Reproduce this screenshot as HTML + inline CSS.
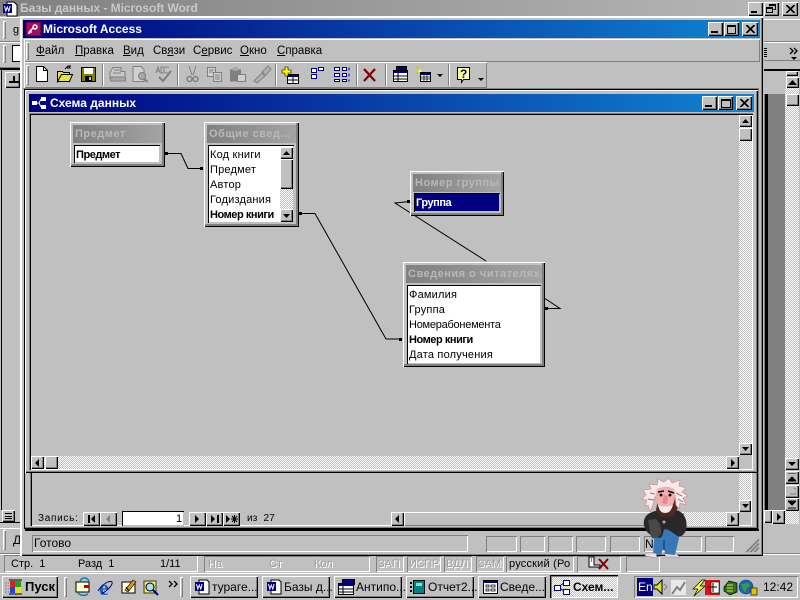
<!DOCTYPE html>
<html><head><meta charset="utf-8"><style>
html,body{margin:0;padding:0;background:#c0c0c0}
#r{position:relative;width:800px;height:600px;overflow:hidden;background:#c0c0c0;font:11px/14px "Liberation Sans",sans-serif;color:#000}
#r div,#r span.t,#r svg{position:absolute}
.t{position:absolute;white-space:nowrap;line-height:14px}
.b{background:#c0c0c0;box-shadow:inset 1px 1px #fff,inset -1px -1px #000,inset -2px -2px #808080}
.g{width:3px;background:#c0c0c0;box-shadow:inset 1px 1px #fff,inset -1px -1px #808080}
.s{width:2px;background:#fff;box-shadow:inset 1px 0 #808080}
.d{background:repeating-conic-gradient(#fff 0 25%,#c0c0c0 0 50%) 0 0/2px 2px}
.tt{background:linear-gradient(90deg,#000080,#1084d0)}
.bar{background:linear-gradient(90deg,#808080,#a4a4a4)}
.w{font-weight:bold;color:#fff;font-size:12px}
.tb{background:#c0c0c0;box-shadow:inset 1px 1px #fff,inset -1px -1px #000,inset -2px -2px #808080;overflow:hidden;white-space:nowrap;line-height:20px;font-size:12px}
.box{background:#c0c0c0;box-shadow:inset 1px 1px #fff,inset -1px -1px #000,inset -2px -2px #808080,inset -3px -3px #808080}
.list{background:#fff;box-shadow:inset 1px 1px #000,inset -1px -1px #c0c0c0;overflow:hidden}
.hd{color:#b8b8b8;font-weight:bold;font-size:11px;letter-spacing:.5px;line-height:18px;padding-left:2px;white-space:nowrap;overflow:hidden;box-sizing:border-box}
.it{position:absolute;left:2px;white-space:nowrap;font-size:11px;line-height:15px;letter-spacing:.2px}
.bd{font-weight:bold;letter-spacing:-.45px}
.gr{color:#a0a0a0;text-shadow:1px 1px #fff}
.m{font-size:11.5px;top:44px}
.pn{box-shadow:inset 1px 1px #808080,inset -1px -1px #fff}
</style></head><body><div id="r">

<!-- Word window -->
<div style="left:0;top:0;width:800px;height:16px;background:linear-gradient(90deg,#808080,#b8b8b8)"></div>
<svg style="left:2px;top:1px" width="16" height="16" viewBox="0 0 16 16"><path d="M5 1h7l3 3v11H5z" fill="#fff" stroke="#000"/><rect x="1" y="3" width="9" height="9" fill="#000080"/><path d="M2.5 5l1.3 5 1.5-4 1.5 4 1.3-5" stroke="#fff" fill="none"/></svg>
<span class="t" style="left:20px;top:1px;color:#c8c8c8;font-weight:bold;font-size:12px;letter-spacing:-.05px">Базы данных - Microsoft Word</span>
<div class="b" style="left:748px;top:2px;width:15px;height:14px"></div><div style="left:751px;top:11px;width:6px;height:2px;background:#000"></div>
<div class="b" style="left:764px;top:2px;width:15px;height:14px"></div>
<svg style="left:766px;top:4px" width="11" height="10"><path d="M3.5 2.5V.5h6v5h-2M3 1.5h6M.5 3.5h6v5h-6zM.5 4.5h6" fill="none" stroke="#000"/></svg>
<div class="b" style="left:782px;top:2px;width:16px;height:14px"></div>
<svg style="left:786px;top:5px" width="9" height="8"><path d="M0 0l8 8M1 0l8 8M8 0L0 8M9 0L1 8" stroke="#000"/></svg>

<!-- Word left strip -->
<div style="left:0;top:17px;width:20px;height:1px;background:#fff"></div>
<div class="g" style="left:3px;top:21px;height:18px"></div>
<span class="t" style="left:13px;top:23px;text-decoration:underline">g</span>
<div style="left:0;top:42px;width:20px;height:1px;background:#fff"></div>
<div style="left:0;top:41px;width:20px;height:1px;background:#808080"></div>
<div class="g" style="left:3px;top:45px;height:18px"></div>
<div style="left:13px;top:46px;width:9px;height:15px;background:#fff;outline:1px solid #000"></div>
<div style="left:0;top:67px;width:20px;height:1px;background:#808080"></div>
<div style="left:1px;top:68px;width:1px;height:442px;background:#000"></div>
<div style="left:0;top:68px;width:20px;height:2px;background:#000"></div>
<div class="b" style="left:5px;top:72px;width:15px;height:16px"></div>
<svg style="left:8px;top:75px" width="12" height="10"><path d="M5 1h2v5H5zM1 6h10v2H1z" fill="#000"/></svg>
<div style="left:0;top:522px;width:20px;height:1px;background:#000"></div>
<div class="b" style="left:2px;top:510px;width:13px;height:12px"></div>
<svg style="left:5px;top:513px" width="8" height="7"><path d="M0 .5h7M0 3.5h7M0 5.5h7" stroke="#000"/></svg>
<div style="left:0;top:528px;width:20px;height:1px;background:#fff"></div>
<div class="g" style="left:3px;top:530px;height:20px"></div>
<span class="t" style="left:13px;top:533px;font-size:12px">Д</span>
<div style="left:0;top:553px;width:800px;height:1px;background:#808080"></div>
<div style="left:0;top:554px;width:800px;height:1px;background:#fff"></div>

<!-- Word right strip -->
<div style="left:764px;top:19px;width:36px;height:1px;background:#fff"></div>
<div style="left:764px;top:41px;width:36px;height:1px;background:#808080"></div>
<div style="left:764px;top:42px;width:36px;height:1px;background:#fff"></div>
<div style="left:764px;top:60px;width:36px;height:1px;background:#808080"></div>
<svg style="left:764px;top:46px" width="36" height="16"><path d="M0 2.5h3M0 4.5h3M0 6.5h3M0 8.5h3M0 10.5h3" stroke="#000"/><path d="M26 2l3 3-3 3M30 2l3 3-3 3" stroke="#000" fill="none" stroke-width="1.3"/><path d="M27 11h6l-3 3z" fill="#000"/></svg>
<div style="left:764px;top:69px;width:36px;height:2px;background:#000"></div>
<div style="left:764px;top:94px;width:21px;height:416px;background:#808080"></div>
<div style="left:765px;top:94px;width:3px;height:416px;background:#000"></div>
<div style="left:765px;top:71px;width:20px;height:23px;background:#c0c0c0"></div>
<div class="d" style="left:785px;top:88px;width:14px;height:370px"></div>
<div class="b" style="left:786px;top:71px;width:12px;height:5px"></div>
<div class="b" style="left:786px;top:77px;width:13px;height:11px"></div><svg style="left:788px;top:80px" width="9" height="5"><path d="M4.5 0L9 5H0z" fill="#000"/></svg>
<div class="b" style="left:786px;top:94px;width:13px;height:12px"></div>
<div class="b" style="left:785px;top:458px;width:14px;height:12px"></div><svg style="left:788px;top:462px" width="8" height="4"><path d="M0 0h8L4 4z" fill="#000"/></svg>
<div class="b" style="left:785px;top:471px;width:14px;height:13px"></div><svg style="left:788px;top:473px" width="8" height="9"><path d="M0 0h8M0 8h8L4 4zM4 3" stroke="#000" fill="#000"/></svg>
<div class="b" style="left:785px;top:485px;width:14px;height:13px"></div><svg style="left:789px;top:487px" width="7" height="8"><path d="M5 1a3 3 0 0 1-1 6H1" stroke="#808080" fill="none"/></svg>
<div class="b" style="left:785px;top:498px;width:14px;height:13px"></div><svg style="left:788px;top:500px" width="8" height="9"><path d="M0 8h8M0 1h8L4 5z" stroke="#000" fill="#000"/></svg>
<div class="b" style="left:764px;top:510px;width:8px;height:13px"></div>
<div class="b" style="left:772px;top:510px;width:13px;height:14px"></div><svg style="left:777px;top:513px" width="4" height="8"><path d="M0 0v8l4-4z" fill="#000"/></svg>
<div class="d" style="left:785px;top:511px;width:14px;height:13px"></div>

<!-- Word status bar -->
<div class="pn" style="left:4px;top:555px;width:194px;height:17px"></div>
<span class="t" style="left:11px;top:557px">Стр.&nbsp; 1</span><span class="t" style="left:78px;top:557px">Разд&nbsp; 1</span><span class="t" style="left:160px;top:557px">1/11</span>
<div class="pn" style="left:204px;top:556px;width:166px;height:16px"></div>
<span class="t gr" style="left:208px;top:557px">На</span><span class="t gr" style="left:269px;top:557px">Ст</span><span class="t gr" style="left:314px;top:557px">Кол</span>
<div class="pn" style="left:376px;top:556px;width:28px;height:16px"></div>
<span class="t gr" style="left:378px;top:557px">ЗАП</span>
<div class="pn" style="left:407px;top:556px;width:34px;height:16px"></div>
<span class="t gr" style="left:409px;top:557px;letter-spacing:-.3px">ИСПР</span>
<div class="pn" style="left:444px;top:556px;width:28px;height:16px"></div>
<span class="t gr" style="left:446px;top:557px">ВДЛ</span>
<div class="pn" style="left:476px;top:556px;width:28px;height:16px"></div>
<span class="t gr" style="left:478px;top:557px">ЗАМ</span>
<div class="pn" style="left:506px;top:556px;width:68px;height:16px"></div>
<span class="t" style="left:509px;top:557px;letter-spacing:.2px">русский (Ро</span>
<div class="pn" style="left:577px;top:556px;width:44px;height:16px"></div>
<svg style="left:588px;top:556px" width="22" height="14"><path d="M1 1h5v8h6v2H1zM3 3h1M3 5h1" stroke="#000" fill="#fff"/><path d="M11 3l9 10M20 3l-9 10" stroke="#800000" stroke-width="2"/></svg>
<div class="pn" style="left:626px;top:556px;width:34px;height:16px"></div>

<!-- Access window -->
<div style="left:20px;top:16px;width:743px;height:540px;background:#c0c0c0;box-shadow:inset 2px 2px #fff,inset -1px -1px #000,inset -2px -2px #808080"></div>
<div class="tt" style="left:23px;top:20px;width:737px;height:18px"></div>
<svg style="left:26px;top:22px" width="15" height="14"><rect width="15" height="14" fill="#800040"/><rect x="1" y="1" width="13" height="12" fill="#a01060"/><path d="M3 10l5-5M9 3a2 2 0 1 1 0 4 2 2 0 0 1 0-4zM5 8v3M3 10v2" stroke="#fff" stroke-width="1.4" fill="none"/></svg>
<span class="t w" style="left:43px;top:22px">Microsoft Access</span>
<div class="b" style="left:708px;top:22px;width:15px;height:14px"></div><div style="left:711px;top:31px;width:7px;height:2px;background:#000"></div>
<div class="b" style="left:724px;top:22px;width:15px;height:14px"></div><div style="left:727px;top:25px;width:7px;height:6px;border:1px solid #000;border-top-width:2px"></div>
<div class="b" style="left:742px;top:22px;width:16px;height:14px"></div><svg style="left:746px;top:25px" width="9" height="8"><path d="M0 0l8 8M1 0l8 8M8 0L0 8M9 0L1 8" stroke="#000"/></svg>

<!-- Menu -->
<div style="left:24px;top:39px;width:736px;height:23px;box-shadow:inset 1px 1px #fff,inset -1px -1px #808080"></div>
<div class="g" style="left:26px;top:42px;height:18px"></div>
<span class="t m" style="left:36px"><u>Ф</u>айл</span>
<span class="t m" style="left:75px"><u>П</u>равка</span>
<span class="t m" style="left:123px"><u>В</u>ид</span>
<span class="t m" style="left:153px">Св<u>я</u>зи</span>
<span class="t m" style="left:193px">С<u>е</u>рвис</span>
<span class="t m" style="left:240px"><u>О</u>кно</span>
<span class="t m" style="left:277px"><u>С</u>правка</span>

<!-- Toolbar -->
<div style="left:24px;top:62px;width:463px;height:26px;box-shadow:inset 1px 1px #fff,inset -1px -1px #808080"></div>
<div class="g" style="left:26px;top:65px;height:20px"></div>
<svg style="left:24px;top:62px" width="470" height="26" viewBox="24 62 470 26">
<path d="M36.5 66.5h7l4 4v11h-11z" fill="#fff" stroke="#000"/><path d="M43.5 66.5v4h4" fill="none" stroke="#000"/>
<path d="M57.5 81.500v-10h5l1 1h6v2h-8l-4 7zM57.500 81.500h12l3-7h-11z" fill="#e8e040" stroke="#000"/><path d="M65 69l3-3 2 1M70 65v3h-3" fill="none" stroke="#000"/>
<rect x="81.500" y="67.500" width="14" height="14" fill="#808000" stroke="#000"/><rect x="84" y="68" width="9" height="6" fill="#fff"/><rect x="85" y="76" width="7" height="5" fill="#000"/><rect x="89" y="77" width="2" height="3" fill="#c0c0c0"/>
<g fill="#a8a8a8" stroke="#808080"><path d="M113 67.500h8v4h4v7h-15v-6z" fill="#c8c8c8"/><path d="M110.500 77h15v4h-15z"/><path d="M114 70h6M113 73h8"/></g>
<g stroke="#808080" fill="#d0d0d0"><path d="M133 66.500h8l3 3v12h-11z"/><circle cx="142" cy="76" r="3.500" fill="#a8a8a8"/><path d="M144.500 79l3 3" stroke-width="2"/></g>
<g fill="none" stroke="#808080"><path d="M156 73l2-6 2 6M157 71h2M161 67h3v6h-3zM165 67h4M165 73h4" stroke-width="1"/><path d="M159 77l4 4 8-10" stroke-width="2"/></g>
<path d="M189 66l3 9M196 66l-3 9" stroke="#808080" fill="none"/><circle cx="189.500" cy="79" r="2.500" fill="none" stroke="#808080" stroke-width="1.500"/><circle cx="195.500" cy="79" r="2.500" fill="none" stroke="#808080" stroke-width="1.500"/>
<g fill="#d0d0d0" stroke="#808080"><path d="M207.500 67.500h8v9h-8z"/><path d="M213.500 72.500h8v9h-8z"/><path d="M209 70h5M209 72h4M215 75h5M215 77h5M215 79h5" fill="none"/></g>
<path d="M230.500 70h10v11h-10z" fill="#808080" stroke="#808080"/><rect x="233" y="67" width="5" height="4" rx="1" fill="#a8a8a8"/><path d="M237.500 74.500h8v7h-8z" fill="#d0d0d0" stroke="#808080"/>
<path d="M254 81l8-8 3 3-8 7zM262 72l6-6 3 3-5 6z" fill="#b0b0b0" stroke="#808080"/>
<rect x="287.500" y="74.500" width="11" height="9" fill="#fff" stroke="#000"/><rect x="288" y="75" width="10" height="2" fill="#000080"/><path d="M288 80h10M293 77v6" stroke="#000"/>
<path d="M285 67h3v3h3v3h-3v3h-3v-3h-3v-3h3z" fill="#ffff00" stroke="#000" stroke-width=".6"/>
<g fill="#fff" stroke="#000080"><path d="M311.500 68.500h5v4h-5zM318.500 67.500h5v3h-5zM311.500 74.500h5v4h-5z"/></g>
<g fill="#fff" stroke="#000080"><path d="M334.500 67.500h5v3h-5zM342.500 67.500h4v3h-4zM334.500 73.500h5v3h-5zM342.500 73.500h4v3h-4zM334.500 79.500h5v2h-5zM342.500 79.500h4v2h-4zM349 67.500v3M349 73.500v3M349 79.500v2"/></g>
<path d="M364 69l11 12M375 69l-11 12" stroke="#800000" stroke-width="2.200"/>
<path d="M396.500 66.500h10v5h-10z" fill="#000080" stroke="#000"/><path d="M393.500 70.500h14v11h-14z" fill="#fff" stroke="#000"/><rect x="394" y="71" width="13" height="2" fill="#000080"/><path d="M398 73v8M394 76h13M394 79h13" stroke="#000"/>
<path d="M419 69l-3-3M419 72l-4 1M421 67l1-3" stroke="#c8c830" fill="none"/><circle cx="420" cy="71" r="1.500" fill="#ffff60"/>
<rect x="420.500" y="72.500" width="10" height="9" fill="#fff" stroke="#000"/><rect x="421" y="73" width="10" height="2" fill="#000080"/><path d="M421 77h9M421 79h9M424 75v6M427 75v6" stroke="#000" stroke-width=".7"/>
<path d="M437 74h6l-3 3z" fill="#000"/>
<path d="M457.500 67.500h12v12h-6l-2 3v-3h-4z" fill="#ffffa0" stroke="#000"/><text x="460" y="78" font-family="Liberation Sans" font-weight="bold" font-size="12" fill="#000080">?</text>
<path d="M478 78h6l-3 3z" fill="#000"/>
</svg>
<div class="s" style="left:102px;top:64px;height:22px"></div>
<div class="s" style="left:177px;top:64px;height:22px"></div>
<div class="s" style="left:275px;top:64px;height:22px"></div>
<div class="s" style="left:356px;top:64px;height:22px"></div>
<div class="s" style="left:385px;top:64px;height:22px"></div>
<div class="s" style="left:448px;top:64px;height:22px"></div>

<!-- MDI client -->
<div style="left:23px;top:88px;width:736px;height:1px;background:#808080"></div>
<div style="left:24px;top:89px;width:735px;height:1px;background:#000"></div>
<div style="left:24px;top:89px;width:1px;height:440px;background:#000"></div>
<div style="left:758px;top:89px;width:1px;height:440px;background:#808080"></div>
<!-- Lower form -->
<div style="left:25px;top:473px;width:733px;height:56px;background:#c0c0c0;box-shadow:inset -1px -1px #000,inset -2px -2px #808080"></div>
<div style="left:30px;top:473px;width:722px;height:53px;box-shadow:inset 1px 0 #808080,inset 2px 0 #000,inset -1px 0 #fff,inset 0 -1px #fff"></div>
<div style="left:25px;top:529px;width:734px;height:2px;background:#000"></div>
<span class="t" style="left:38px;top:512px;letter-spacing:.7px;font-size:10px">Запись:</span>
<div class="b" style="left:83px;top:512px;width:17px;height:14px"></div><svg style="left:88px;top:515px" width="8" height="8"><path d="M0 0h2v8H0zM7 0v8L3 4z" fill="#000"/></svg>
<div class="b" style="left:100px;top:512px;width:17px;height:14px"></div><svg style="left:106px;top:515px" width="5" height="8"><path d="M4 0v8L0 4z" fill="#808080"/></svg>
<div style="left:122px;top:511px;width:62px;height:15px;background:#fff;box-shadow:inset 1px 1px #000,inset -1px -1px #c0c0c0"></div>
<span class="t" style="left:176px;top:512px;font-size:11px">1</span>
<div class="b" style="left:189px;top:512px;width:17px;height:14px"></div><svg style="left:195px;top:515px" width="5" height="8"><path d="M0 0v8l4-4z" fill="#000"/></svg>
<div class="b" style="left:206px;top:512px;width:17px;height:14px"></div><svg style="left:211px;top:515px" width="8" height="8"><path d="M0 0v8l4-4zM6 0h2v8H6z" fill="#000"/></svg>
<div class="b" style="left:223px;top:512px;width:17px;height:14px"></div><svg style="left:226px;top:515px" width="12" height="8"><path d="M0 0v8l4-4z" fill="#000"/><path d="M6 1l5 6M11 1l-5 6M8.500 0v8M5 4h7" stroke="#000"/></svg>
<span class="t" style="left:247px;top:512px;letter-spacing:.2px;font-size:10px">из&nbsp; 27</span>
<div class="b" style="left:391px;top:512px;width:13px;height:14px"></div><svg style="left:395px;top:515px" width="4" height="8"><path d="M4 0v8L0 4z" fill="#000"/></svg>
<div class="b" style="left:404px;top:512px;width:280px;height:14px;box-shadow:inset 1px 1px #fff,inset -1px -1px #808080"></div>
<div class="d" style="left:684px;top:512px;width:42px;height:14px"></div>
<div class="b" style="left:726px;top:512px;width:13px;height:14px"></div><svg style="left:731px;top:515px" width="4" height="8"><path d="M0 0v8l4-4z" fill="#000"/></svg>
<div class="d" style="left:739px;top:473px;width:12px;height:27px"></div>
<div class="b" style="left:739px;top:500px;width:12px;height:12px"></div><svg style="left:742px;top:504px" width="7" height="4"><path d="M0 0h7L3.500 4z" fill="#000"/></svg>

<!-- Child window -->
<div style="left:25px;top:90px;width:733px;height:383px;background:#c0c0c0;box-shadow:inset 1px 1px #fff,inset -1px -1px #000,inset -2px -2px #808080"></div>
<div class="tt" style="left:29px;top:94px;width:725px;height:18px"></div>
<svg style="left:31px;top:96px" width="16" height="14"><path d="M5 7h3l2-4M8 7l2 4" stroke="#fff" fill="none"/><rect x="1" y="5" width="5" height="4" fill="#fff"/><rect x="10" y="1" width="5" height="4" fill="#fff"/><rect x="10" y="9" width="5" height="4" fill="#fff"/></svg>
<span class="t w" style="left:50px;top:96px">Схема данных</span>
<div class="b" style="left:702px;top:96px;width:15px;height:14px"></div><div style="left:705px;top:105px;width:7px;height:2px;background:#000"></div>
<div class="b" style="left:718px;top:96px;width:15px;height:14px"></div><div style="left:721px;top:99px;width:8px;height:6px;border:1px solid #000;border-top-width:2px"></div>
<div class="b" style="left:736px;top:96px;width:16px;height:14px"></div><svg style="left:740px;top:99px" width="9" height="8"><path d="M0 0l8 8M1 0l8 8M8 0L0 8M9 0L1 8" stroke="#000"/></svg>
<div style="left:29px;top:113px;width:724px;height:357px;background:#c0c0c0;box-shadow:inset 1px 1px #808080,inset 2px 2px #000,inset -1px -1px #fff"></div>

<!-- Scrollbars of canvas -->
<div class="d" style="left:739px;top:115px;width:13px;height:340px"></div>
<div class="b" style="left:739px;top:115px;width:13px;height:12px"></div><svg style="left:742px;top:119px" width="7" height="4"><path d="M3.500 0L7 4H0z" fill="#000"/></svg>
<div class="b" style="left:739px;top:128px;width:13px;height:13px"></div>
<div class="b" style="left:739px;top:443px;width:13px;height:12px"></div><svg style="left:742px;top:447px" width="7" height="4"><path d="M0 0h7L3.500 4z" fill="#000"/></svg>
<div class="d" style="left:31px;top:456px;width:708px;height:13px"></div>
<div class="b" style="left:31px;top:456px;width:13px;height:13px"></div><svg style="left:35px;top:459px" width="4" height="8"><path d="M4 0v8L0 4z" fill="#000"/></svg>
<div class="b" style="left:45px;top:456px;width:13px;height:13px"></div>
<div class="b" style="left:726px;top:456px;width:13px;height:13px"></div><svg style="left:731px;top:459px" width="4" height="8"><path d="M0 0v8l4-4z" fill="#000"/></svg>

<!-- Relationship lines -->
<svg style="left:0;top:0" width="800" height="600">
<g fill="none" stroke="#000" stroke-width="1">
<path d="M165 153.500h16l7 15h15"/>
<path d="M299 213.500h16l71 125.500h15"/>
<path d="M410 201.500l-15 1.500 91 58"/>
<path d="M545 308.500h15l-15-10"/>
</g>
<g fill="#000"><rect x="165" y="152" width="3" height="3"/><rect x="200" y="167" width="3" height="3"/><rect x="299" y="212" width="3" height="3"/><rect x="399" y="338" width="3" height="3"/><rect x="407" y="200" width="3" height="3"/><rect x="545" y="307" width="3" height="3"/></g>
</svg>

<!-- Table: Предмет -->
<div class="box" style="left:70px;top:122px;width:95px;height:45px"></div>
<div class="bar hd" style="left:73px;top:125px;width:89px;height:18px">Предмет</div>
<div class="list" style="left:74px;top:145px;width:86px;height:18px"><span class="it bd" style="top:3px">Предмет</span></div>

<!-- Table: Общие свед -->
<div class="box" style="left:204px;top:122px;width:95px;height:105px"></div>
<div class="bar hd" style="left:207px;top:125px;width:89px;height:18px">Общие свед...</div>
<div class="list" style="left:208px;top:145px;width:86px;height:78px">
<span class="it" style="top:3px">Код книги</span><span class="it" style="top:18px">Предмет</span><span class="it" style="top:33px">Автор</span><span class="it" style="top:48px">Годиздания</span><span class="it bd" style="top:63px">Номер книги</span>
</div>
<div class="d" style="left:280px;top:147px;width:13px;height:75px"></div>
<div class="b" style="left:280px;top:147px;width:13px;height:12px"></div><svg style="left:283px;top:151px" width="7" height="4"><path d="M3.500 0L7 4H0z" fill="#000"/></svg>
<div class="b" style="left:280px;top:159px;width:13px;height:30px"></div>
<div class="b" style="left:280px;top:209px;width:13px;height:13px"></div><svg style="left:283px;top:214px" width="7" height="4"><path d="M0 0h7L3.500 4z" fill="#000"/></svg>

<!-- Table: Номер группы -->
<div class="box" style="left:410px;top:171px;width:94px;height:45px"></div>
<div class="bar hd" style="left:413px;top:174px;width:88px;height:18px">Номер группы</div>
<div class="list" style="left:414px;top:193px;width:86px;height:19px"><div style="left:1px;top:1px;width:84px;height:17px;background:#000080"></div><span class="it bd" style="top:3px;color:#fff">Группа</span></div>

<!-- Table: Сведения -->
<div class="box" style="left:403px;top:262px;width:142px;height:105px"></div>
<div class="bar hd" style="left:406px;top:265px;width:136px;height:18px">Сведения о читателях</div>
<div class="list" style="left:407px;top:285px;width:134px;height:79px">
<span class="it" style="top:3px">Фамилия</span><span class="it" style="top:18px">Группа</span><span class="it" style="top:33px;letter-spacing:-.25px">Номерабонемента</span><span class="it bd" style="top:48px">Номер книги</span><span class="it" style="top:63px">Дата получения</span>
</div>

<!-- Access status -->
<div class="pn" style="left:32px;top:535px;width:436px;height:17px"></div>
<span class="t" style="left:34px;top:536px;font-size:12px">Готово</span>
<div class="pn" style="left:486px;top:536px;width:31px;height:16px"></div>
<div class="pn" style="left:520px;top:536px;width:25px;height:16px"></div>
<div class="pn" style="left:548px;top:536px;width:25px;height:16px"></div>
<div class="pn" style="left:576px;top:536px;width:30px;height:16px"></div>
<div class="pn" style="left:610px;top:536px;width:30px;height:16px"></div>
<div class="pn" style="left:644px;top:536px;width:58px;height:16px"></div>
<span class="t" style="left:645px;top:537px;font-size:12px">N</span>
<div class="pn" style="left:705px;top:536px;width:29px;height:16px"></div>
<svg style="left:745px;top:538px" width="15" height="15"><path d="M14 1L1 14M14 2L2 14M14 5L5 14M14 6L6 14M14 9L9 14M14 10L10 14" stroke="#808080"/></svg>

<!-- Taskbar -->
<div style="left:0;top:572px;width:800px;height:28px;background:#c0c0c0;box-shadow:inset 0 1px #c0c0c0,inset 0 2px #fff"></div>
<div class="b" style="left:2px;top:576px;width:56px;height:22px"></div>
<svg style="left:5px;top:579px" width="20" height="16"><path d="M5 2h5v6H5z" fill="#e02020"/><path d="M10 2h6v6h-6z" fill="#20a020"/><path d="M5 8h5v6H5z" fill="#2040e0"/><path d="M10 8h6v6h-6z" fill="#e0e020"/><path d="M4 1h13M4 15h13" stroke="#000"/><path d="M0 4h4M0 7h4M0 10h4M0 13h4" stroke="#808080" stroke-dasharray="2 1"/></svg>
<span class="t" style="left:25px;top:580px;font-weight:bold;font-size:13px">Пуск</span>
<div class="g" style="left:64px;top:577px;height:20px"></div>
<svg style="left:70px;top:576px" width="115" height="22">
<path d="M6 6h13v10H6z" fill="#ffffd0" stroke="#000"/><path d="M10 5c2-4 7-4 9 0M8 17c3 3 7 3 10 1" fill="none" stroke="#0080c0" stroke-width="1.500"/><rect x="14" y="9" width="5" height="3" fill="#c00000"/>
<text x="29" y="19" font-family="Liberation Serif" font-size="22" font-weight="bold" fill="#1060d0">e</text><path d="M28 15c4-7 12-11 14-9 1 2-3 8-11 12" fill="none" stroke="#000080"/>
<path d="M52 6h13v11H52z" fill="#ffffe0" stroke="#000"/><path d="M55 14l8-10 3 2-8 10z" fill="#e09020" stroke="#000" stroke-width=".6"/><path d="M56 11l3 4" stroke="#000"/>
<path d="M74 5h12v12H74z" fill="#f0e080" stroke="#404000"/><circle cx="80" cy="11" r="4" fill="#a0e0f0" stroke="#000"/><path d="M83 14l5 5" stroke="#000080" stroke-width="2"/>
<path d="M99 5l3 3-3 3M104 5l3 3-3 3" fill="none" stroke="#000" stroke-width="1.300"/></svg>
<div class="g" style="left:180px;top:577px;height:20px"></div>

<div class="tb" style="left:190px;top:576px;width:68px;height:22px"></div><span class="t" style="left:212px;top:580px;font-size:12px">тураге...</span>
<div class="tb" style="left:262px;top:576px;width:68px;height:22px"></div><span class="t" style="left:284px;top:580px;font-size:12px">Базы д...</span>
<div class="tb" style="left:334px;top:576px;width:68px;height:22px"></div><span class="t" style="left:356px;top:580px;font-size:12px">Антипо...</span>
<div class="tb" style="left:406px;top:576px;width:68px;height:22px"></div><span class="t" style="left:428px;top:580px;font-size:12px">Отчет2...</span>
<div class="tb" style="left:478px;top:576px;width:68px;height:22px"></div><span class="t" style="left:500px;top:580px;font-size:12px">Сведе...</span>
<div class="d" style="left:550px;top:575px;width:68px;height:23px;box-shadow:inset 1px 1px #000,inset 2px 2px #808080,inset -1px -1px #fff"></div><span class="t" style="left:573px;top:580px;font-size:12px;font-weight:bold">Схем...</span>
<svg style="left:190px;top:576px" width="430" height="22">
<g><path d="M9 4h8l2 2v12H9z" fill="#fff" stroke="#000"/><rect x="5" y="6" width="9" height="9" fill="#000080"/><path d="M6.500 8l1.300 5 1.500-4 1.500 4 1.300-5" stroke="#fff" fill="none"/></g>
<g transform="translate(72 0)"><path d="M9 4h8l2 2v12H9z" fill="#fff" stroke="#000"/><rect x="5" y="6" width="9" height="9" fill="#000080"/><path d="M6.500 8l1.300 5 1.500-4 1.500 4 1.300-5" stroke="#fff" fill="none"/></g>
<g transform="translate(144 0)"><path d="M8.500 3.500h12v5h-12z" fill="#000080" stroke="#000"/><path d="M4.500 7.500h15v11h-15z" fill="#fff" stroke="#000"/><rect x="5" y="8" width="14" height="2" fill="#000080"/><path d="M9 10v8M5 13h14M5 16h14" stroke="#000"/></g>
<g transform="translate(216 0)"><rect x="7.500" y="4.500" width="11" height="13" fill="#008080" stroke="#000"/><path d="M5 6v2M5 10v2M5 14v2" stroke="#000" stroke-width="2"/><rect x="10" y="7" width="6" height="3" fill="#80e0e0"/></g>
<g transform="translate(288 0)"><rect x="5.500" y="4.500" width="14" height="13" fill="#fff" stroke="#000"/><rect x="6" y="5" width="13" height="2" fill="#000080"/><path d="M8 9h3v2H8zM13 9h4v2h-4zM8 13h3v2H8zM13 13h4v2h-4z" fill="none" stroke="#000" stroke-width=".8"/></g>
<g transform="translate(360 0)" fill="#fff" stroke="#000080"><path d="M14 7l-6 4 6 4" fill="none"/><rect x="4.500" y="9.500" width="6" height="5"/><rect x="13.500" y="4.500" width="6" height="5"/><rect x="13.500" y="13.500" width="6" height="5"/></g>
</svg>

<!-- Tray -->
<div class="pn" style="left:634px;top:576px;width:164px;height:22px"></div>
<div style="left:637px;top:578px;width:16px;height:18px;background:#000080"></div>
<span class="t" style="left:638px;top:580px;color:#fff;font-size:12px">En</span>
<svg style="left:653px;top:577px" width="106" height="20">
<path d="M1 8h3l5-5v14l-5-5H1z" fill="#e0e020" stroke="#000"/><path d="M11 7l3 3-3 3" stroke="#808080" fill="none"/>
<rect x="18" y="3" width="15" height="15" fill="#e8e8e8"/><path d="M19 17l5-7 3 3 5-8" stroke="#808080" stroke-width="2" fill="none"/>
<path d="M49 3l-9 9h5l-4 7 11-10h-5l5-6z" fill="#ffff40" stroke="#000" stroke-width=".7"/>
<rect x="52" y="3" width="15" height="15" fill="#e01010"/><rect x="58" y="5" width="8" height="11" fill="#fff" stroke="#000" stroke-width=".6"/><path d="M55 10h9M60 6v9" stroke="#000"/>
<path d="M71 10l5-6 8 2v9l-7 3-6-4z" fill="#307020" stroke="#000" stroke-width=".7"/><path d="M74 8h6M74 11h6M74 14h6" stroke="#e0e040"/>
<circle cx="93" cy="10" r="7" fill="#2060c0" stroke="#004080" stroke-width=".6"/><path d="M88 7c3 1 4-2 7-1s1 4-1 5 1 4-3 4" fill="#30a030"/><rect x="98" y="11" width="6" height="7" fill="#e0c000" stroke="#000" stroke-width=".6"/>
</svg>
<span class="t" style="left:763px;top:580px;font-size:12px">12:42</span>

<!-- Mascot -->
<svg style="left:640px;top:476px" width="50" height="84" viewBox="640 476 50 84">
<path d="M656 553h-10l-1 3 12 2zM664 553h11l5 4h-14z" fill="#e8e0e0" stroke="#a08080" stroke-width=".5"/>
<path d="M655 529l10-2 13 2 1 9-4 17-10-1-1-8-3 9-8-2z" fill="#3878b8"/>
<path d="M664 540l0 10" stroke="#184878" stroke-width="1.500"/>
<path d="M650 513c8-4 23-5 29-2 6 3 9 11 7 19-2 6-7 8-10 5-3-2-6-5-11-6-3 3-1 8-6 9-6-1-12-4-14-10-3-6 0-13 5-15z" fill="#282828"/>
<path d="M648 520c2 8 1 14 4 18 4 1 8-1 9-5 1-6-2-11-5-14z" fill="#484848"/>
<circle cx="664" cy="522" r="1.500" fill="#b0b0b0"/>
<path d="M656 510l4-20 14-2 5 18-6 10-12 1z" fill="#502820"/>
<path d="M643 490l8-1-2-5 8 1 1-6 6 3 5-4 3 5 8-3-1 6 7 2-4 4 6 4-5 2 3 7-6-2-1 6-3-4-1-10-6-4-10 1-4 5-2 8-3 7-2-7-3 1 2-6-5-1 4-4z" fill="#f4ecec" stroke="#e09090" stroke-width=".8"/>
<path d="M657 489c5-3 13-3 17 0 2 6 1 14-3 18l-6 3-5-2c-4-4-5-12-3-19z" fill="#f0b0b0"/>
<path d="M658 492l6-1M668 491l6 2" stroke="#101010" stroke-width="1.500"/>
<circle cx="661" cy="495" r="1.500" fill="#101010"/><circle cx="670" cy="495" r="1.500" fill="#101010"/>
<path d="M664 495l-2 8 5 1 1-8z" fill="#e88890"/>
<path d="M658 505c4 2 11 2 15 0-2 6-4 8-8 8s-6-3-7-8z" fill="#f4e8e8"/>
<path d="M676 493l6 3M678 499l5 3M650 493l5 1M648 499l6 1" stroke="#c06060"/>
</svg>
</div></body></html>
